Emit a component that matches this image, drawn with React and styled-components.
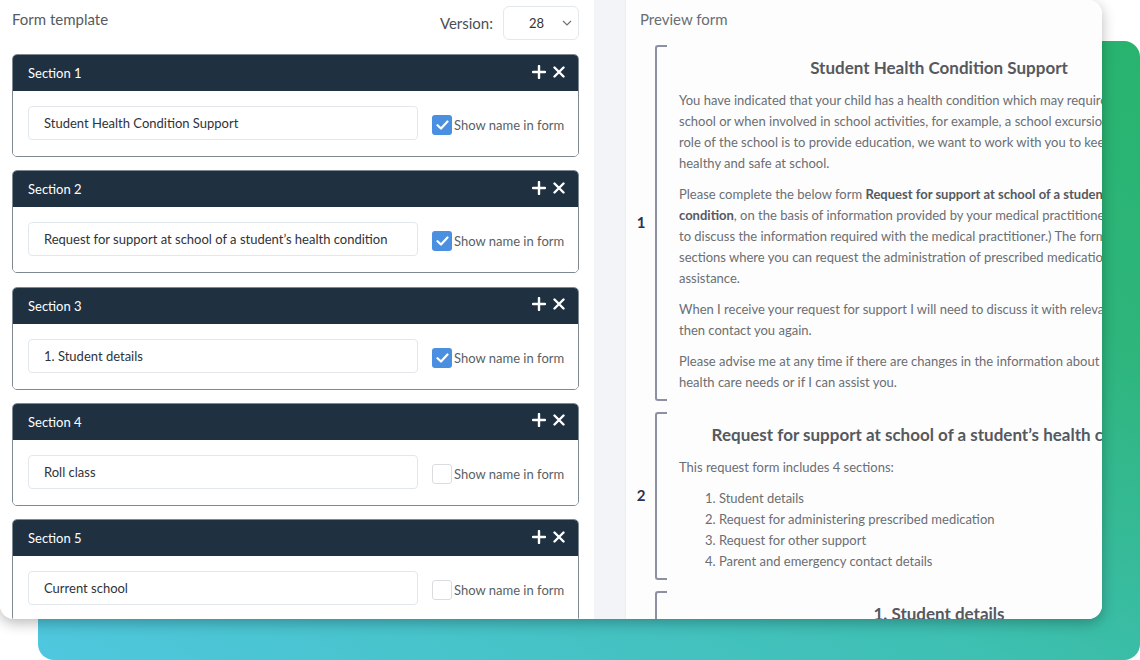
import React from 'react';
import styled, { createGlobalStyle } from 'styled-components';

const GlobalStyle = createGlobalStyle`
  html, body {
    margin: 0;
    padding: 0;
    background: #ffffff;
    overflow: hidden;
  }
  body {
    font-family: Lato, "Open Sans", "Liberation Sans", sans-serif;
  }
`;

const Stage = styled.div`
  position: relative;
  width: 1140px;
  height: 660px;

  &::before {
    content: '';
    position: absolute;
    left: 38px;
    top: 41px;
    width: 1102px;
    height: 619px;
    border-radius: 16px;
    background: linear-gradient(to top right, #4fc7df 0%, #3dbfb0 45%, #2db57b 75%, #28b46f 100%);
  }
`;

const Card = styled.div`
  position: relative;
  width: 1102px;
  height: 619px;
  border-radius: 0 14px 14px 14px;
  background: #ffffff;
  box-shadow: 0 4px 14px rgba(0, 0, 0, 0.28);
  overflow: hidden;
  display: grid;
  grid-template-columns: 594px 31px 1fr;
`;

const LeftPanel = styled.section`
  background: #ffffff;
  padding: 0 15px 0 12px;
  display: flex;
  flex-direction: column;
`;

const TopBar = styled.div`
  height: 46px;
  display: flex;
  align-items: flex-start;
  justify-content: space-between;
  padding-top: 6px;
  box-sizing: border-box;
`;

const PanelTitle = styled.h2`
  margin: 4px 0 0;
  font-size: 15px;
  font-weight: 400;
  color: #555b61;
`;

const VersionGroup = styled.div`
  display: flex;
  align-items: center;
  gap: 10px;
`;

const VersionLabel = styled.span`
  font-size: 15px;
  color: #4a4f55;
`;

const Select = styled.div`
  width: 76px;
  height: 34px;
  box-sizing: border-box;
  border: 1px solid #e3e8ee;
  border-radius: 6px;
  display: flex;
  align-items: center;
  position: relative;
  font-size: 13px;
  color: #333;
  padding-left: 25px;

  svg {
    position: absolute;
    right: 6px;
    top: 13px;
  }
`;

const SectionList = styled.div`
  display: flex;
  flex-direction: column;
  gap: 13.3px;
  margin-top: 8px;
`;

const SectionCard = styled.div`
  border: 1.5px solid #7f8991;
  border-radius: 5px;
  overflow: hidden;
  flex-shrink: 0;
`;

const SectionHeader = styled.div`
  height: 36px;
  background: #1f3141;
  display: flex;
  align-items: center;
  justify-content: space-between;
  padding: 0 13px 0 15px;
  color: #ffffff;
  font-size: 13px;
`;

const Actions = styled.div`
  display: flex;
  align-items: center;
  gap: 7px;
  margin-top: -3px;
`;

const SectionBody = styled.div`
  background: #ffffff;
  display: flex;
  align-items: center;
  padding: 15px 14px 16px 15px;
  gap: 14px;
`;

const NameInput = styled.div`
  width: 390px;
  height: 34px;
  flex-shrink: 0;
  box-sizing: border-box;
  border: 1px solid #e2e7ed;
  border-radius: 4px;
  display: flex;
  align-items: center;
  padding-left: 15px;
  font-size: 13px;
  color: #2f3338;
  white-space: nowrap;
  overflow: hidden;
`;

const CheckRow = styled.label`
  display: flex;
  align-items: center;
  gap: 2px;
  font-size: 13px;
  color: #5a5f64;
  margin-top: 4px;
  white-space: nowrap;
`;

const Box = styled.span`
  width: 20px;
  height: 20px;
  box-sizing: border-box;
  border-radius: 3px;
  display: flex;
  align-items: center;
  justify-content: center;
  background: ${p => (p.$checked ? '#4a8fe0' : '#ffffff')};
  border: ${p => (p.$checked ? 'none' : '1.5px solid #dadde0')};
`;

const Strip = styled.div`
  background: #f3f4f7;
`;

const PreviewPanel = styled.section`
  background: #fdfdfe;
  border-left: 1px solid #eceef1;
  overflow: hidden;
`;

const PreviewTitle = styled.h2`
  margin: 10px 0 0 14px;
  font-size: 15px;
  font-weight: 400;
  color: #6a6e73;
  height: 24px;
`;

const PreviewBody = styled.div`
  padding: 11px 0 0 6px;
  display: flex;
  flex-direction: column;
  gap: 11px;
`;

const Block = styled.div`
  display: flex;
  align-items: stretch;
`;

const Num = styled.div`
  width: 18px;
  flex-shrink: 0;
  display: flex;
  align-items: center;
  justify-content: center;
  font-size: 15px;
  font-weight: 700;
  color: #2c3352;
  margin-right: 5px;
  padding-bottom: 3px;
`;

const Bracket = styled.div`
  width: 10px;
  flex-shrink: 0;
  border: 2px solid #8c90a2;
  border-right: none;
  border-radius: 3px 0 0 3px;
`;

const Content = styled.div`
  width: 520px;
  flex-shrink: 0;
  padding: 11px 0 8px 12px;
  color: #6b6e72;
  font-size: 13px;
`;

const Heading = styled.h3`
  margin: 0 0 10px;
  text-align: center;
  font-size: 17px;
  line-height: 24px;
  font-weight: 700;
  color: #55595e;
  white-space: nowrap;
`;

const Para = styled.p`
  margin: 0 0 10px;
  line-height: 21px;

  &:last-child {
    margin-bottom: 0;
  }

  span {
    display: block;
    white-space: nowrap;
  }

  b {
    color: #55595e;
  }
`;

const List = styled.ol`
  margin: 10px 0 0;
  padding-left: 26px;
  list-style-position: inside;
  line-height: 21px;
`;

const PlusIcon = () => (
  <svg width="14" height="14" viewBox="0 0 14 14">
    <path d="M7 1v12M1 7h12" stroke="#fff" strokeWidth="2.4" strokeLinecap="round" />
  </svg>
);

const CloseIcon = () => (
  <svg width="12" height="12" viewBox="0 0 12 12">
    <path d="M1.5 1.5l9 9M10.5 1.5l-9 9" stroke="#fff" strokeWidth="2.4" strokeLinecap="round" />
  </svg>
);

const CheckMark = () => (
  <svg width="13" height="10" viewBox="0 0 13 10">
    <path d="M1.5 5.2l3.5 3.3L11.5 1.5" stroke="#fff" strokeWidth="2.2" fill="none" strokeLinecap="round" strokeLinejoin="round" />
  </svg>
);

const Chevron = () => (
  <svg width="10" height="6" viewBox="0 0 10 6">
    <path d="M1 1l4 4 4-4" stroke="#6d7378" strokeWidth="1.2" fill="none" />
  </svg>
);

const sections = [
  { name: 'Student Health Condition Support', show: true },
  { name: 'Request for support at school of a student’s health condition', show: true },
  { name: '1. Student details', show: true },
  { name: 'Roll class', show: false },
  { name: 'Current school', show: false },
];

const App = () => (
  <>
    <GlobalStyle />
    <Stage>
      <Card>
        <LeftPanel>
          <TopBar>
            <PanelTitle>Form template</PanelTitle>
            <VersionGroup>
              <VersionLabel>Version:</VersionLabel>
              <Select>
                28
                <Chevron />
              </Select>
            </VersionGroup>
          </TopBar>
          <SectionList>
            {sections.map((s, i) => (
              <SectionCard key={i}>
                <SectionHeader>
                  <span>Section {i + 1}</span>
                  <Actions>
                    <PlusIcon />
                    <CloseIcon />
                  </Actions>
                </SectionHeader>
                <SectionBody>
                  <NameInput>{s.name}</NameInput>
                  <CheckRow>
                    <Box $checked={s.show}>{s.show && <CheckMark />}</Box>
                    Show name in form
                  </CheckRow>
                </SectionBody>
              </SectionCard>
            ))}
          </SectionList>
        </LeftPanel>
        <Strip />
        <PreviewPanel>
          <PreviewTitle>Preview form</PreviewTitle>
          <PreviewBody>
            <Block>
              <Num>1</Num>
              <Bracket />
              <Content>
                <Heading>Student Health Condition Support</Heading>
                <Para>
                  <span>You have indicated that your child has a health condition which may require support at</span>
                  <span>school or when involved in school activities, for example, a school excursion or camp. While the</span>
                  <span>role of the school is to provide education, we want to work with you to keep your child</span>
                  <span>healthy and safe at school.</span>
                </Para>
                <Para>
                  <span>Please complete the below form <b>Request for support at school of a student’s health</b></span>
                  <span><b>condition</b>, on the basis of information provided by your medical practitioner. (You may need</span>
                  <span>to discuss the information required with the medical practitioner.) The form includes</span>
                  <span>sections where you can request the administration of prescribed medication or other</span>
                  <span>assistance.</span>
                </Para>
                <Para>
                  <span>When I receive your request for support I will need to discuss it with relevant staff and</span>
                  <span>then contact you again.</span>
                </Para>
                <Para>
                  <span>Please advise me at any time if there are changes in the information about your child’s</span>
                  <span>health care needs or if I can assist you.</span>
                </Para>
              </Content>
            </Block>
            <Block>
              <Num>2</Num>
              <Bracket />
              <Content>
                <Heading>Request for support at school of a student’s health condition</Heading>
                <Para>
                  <span>This request form includes 4 sections:</span>
                </Para>
                <List>
                  <li>Student details</li>
                  <li>Request for administering prescribed medication</li>
                  <li>Request for other support</li>
                  <li>Parent and emergency contact details</li>
                </List>
              </Content>
            </Block>
            <Block>
              <Num>3</Num>
              <Bracket />
              <Content>
                <Heading>1. Student details</Heading>
                <Para>
                  <span>Student name</span>
                </Para>
              </Content>
            </Block>
          </PreviewBody>
        </PreviewPanel>
      </Card>
    </Stage>
  </>
);

export default App;
